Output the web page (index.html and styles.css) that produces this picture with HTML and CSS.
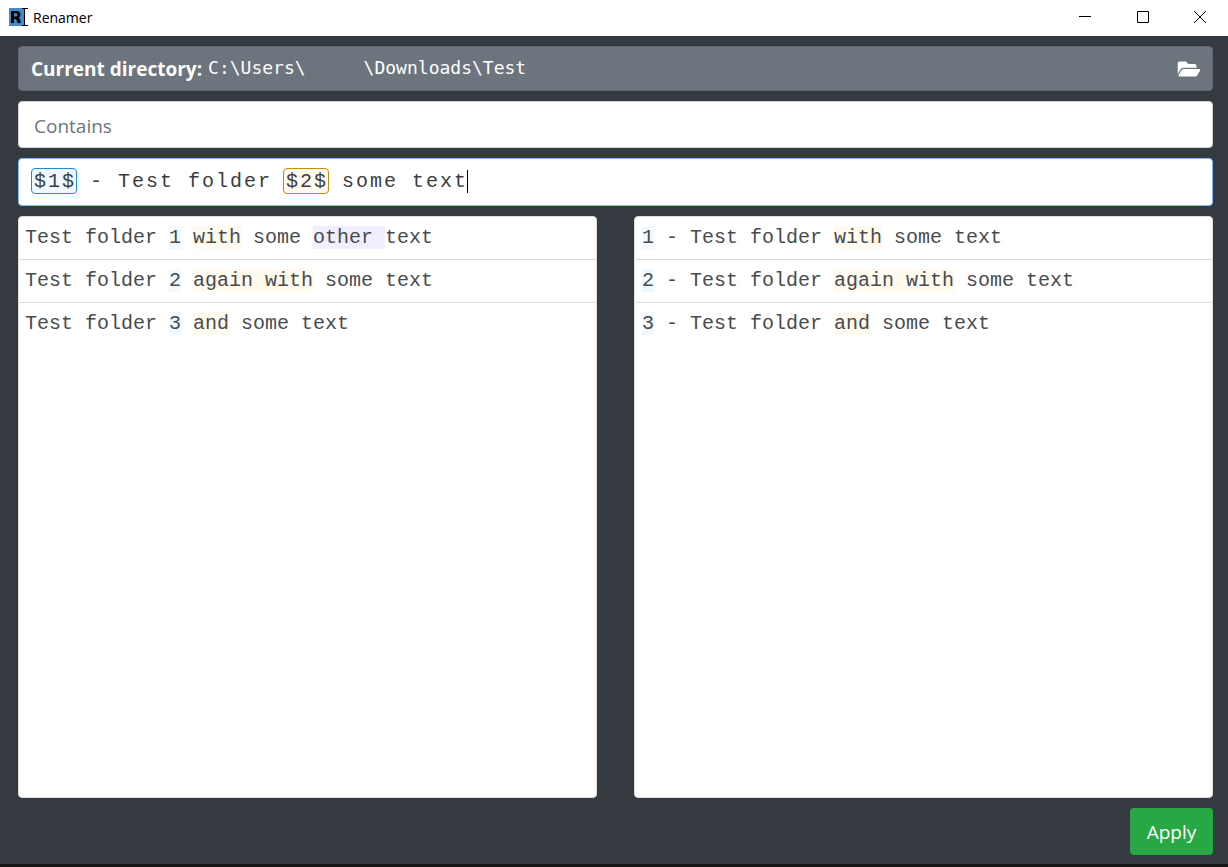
FILE: index.html
```html
<!DOCTYPE html>
<html lang="en">
<head>
<meta charset="utf-8">
<meta name="viewport" content="width=device-width, initial-scale=1">
<title>Renamer</title>
<link rel="stylesheet" href="styles.css">
</head>
<body>
<div class="window">
  <header class="titlebar">
    <svg class="app-icon" viewBox="0 0 19 18" aria-hidden="true">
      <rect width="15" height="18" fill="#428bca"/>
      <path fill="#000" fill-rule="evenodd" d="M2 3h5.500q4 0 4 3.600 0 2.400-2 3.200 1 .4 1.600 1.900L12 15H8.600l-1.100-3q-.4-1.100-1.300-1.100H5V15H2zM5 5.300v3.300h1.800q1.600 0 1.600-1.700T6.900 5.300z"/>
      <path fill="none" stroke="#000" d="M13 .5h6M13 17.500h6M15.500 0v18"/>
    </svg>
    <h1 class="titlebar-name">Renamer</h1>
    <div class="window-controls">
      <button class="window-button" type="button" aria-label="Minimize">
        <svg viewBox="0 0 12 12" aria-hidden="true"><path d="M0 5.500h12"/></svg>
      </button>
      <button class="window-button" type="button" aria-label="Maximize">
        <svg viewBox="0 0 12 12" aria-hidden="true"><path d="M.5.5h11v11H.5z"/></svg>
      </button>
      <button class="window-button" type="button" aria-label="Close">
        <svg viewBox="0 0 12 12" aria-hidden="true"><path d="M0 0l12 12M12 0L0 12"/></svg>
      </button>
    </div>
  </header>

  <main class="content">
    <section class="directory">
      <strong class="directory-label">Current directory:</strong>
      <code class="directory-path"><span>C:\Users\</span><span>\Downloads\Test</span></code>
      <button class="directory-open" type="button" aria-label="Choose directory">
        <svg viewBox="0 0 576 512" aria-hidden="true"><path fill="#fff" d="M572.694 292.093L500.270 416.248A63.997 63.997 0 0 1 444.989 448H45.025c-18.523 0-30.064-20.093-20.731-36.093l72.424-124.155A64 64 0 0 1 152 256h399.964c18.523 0 30.064 20.093 20.730 36.093zM152 224h328v-48c0-26.510-21.490-48-48-48H272l-64-64H48C21.490 64 0 85.490 0 112v278.046l69.077-118.418C86.214 242.250 117.989 224 152 224z"/></svg>
      </button>
    </section>

    <input class="field filter" type="text" placeholder="Contains" aria-label="Contains">

    <div class="field pattern">
      <div class="pattern-marks" aria-hidden="true">
        <span class="chip chip-blue"></span>
        <span class="chip chip-gold"></span>
        <span class="caret"></span>
      </div>
      <input class="pattern-input" type="text" aria-label="New name pattern" value="$1$ - Test folder $2$ some text" spellcheck="false">
    </div>

    <div class="panes">
      <ul class="pane" aria-label="Current names">
        <li class="row">Test folder <mark class="blue">1</mark> <mark class="gold">with</mark> some <mark class="violet">other </mark>text</li>
        <li class="row">Test folder <mark class="blue">2</mark> <mark class="gold">again with</mark> some text</li>
        <li class="row">Test folder <mark class="blue">3</mark> <mark class="gold">and</mark> some text</li>
      </ul>
      <ul class="pane pane-result" aria-label="New names">
        <li class="row"><mark class="blue">1</mark> - Test folder <mark class="gold">with</mark> some text</li>
        <li class="row"><mark class="blue">2</mark> - Test folder <mark class="gold">again with</mark> some text</li>
        <li class="row"><mark class="blue">3</mark> - Test folder <mark class="gold">and</mark> some text</li>
      </ul>
    </div>

    <button class="apply" type="button">Apply</button>
  </main>
</div>
</body>
</html>
```
FILE: styles.css
```css
* {
  box-sizing: border-box;
}

body {
  margin: 0;
  font-family: "Open Sans", "Noto Sans", sans-serif;
  font-size: 19px;
  color: #212529;
}

button,
input {
  font: inherit;
  color: inherit;
}

.window {
  display: flex;
  flex-direction: column;
  min-height: 100vh;
  background: #353940;
  border-bottom: 3px solid #151518;
}

.titlebar {
  display: flex;
  align-items: center;
  height: 36px;
  padding: 0 0 2px 9px;
  background: #fff;
  color: #000;
}

.app-icon {
  width: 19px;
  height: 18px;
  margin-right: 5px;
}

.titlebar-name {
  margin: 0;
  font-size: 14px;
  font-weight: 400;
}

.window-controls {
  display: flex;
  margin-left: auto;
}

.window-button {
  display: grid;
  place-items: center;
  width: 58px;
  height: 34px;
  padding: 0;
  border: 0;
  background: none;
}

.window-button:last-child {
  width: 56px;
}

.window-button svg {
  width: 12px;
  height: 12px;
  fill: none;
  stroke: #000;
}

.content {
  display: flex;
  flex: 1;
  flex-direction: column;
  gap: 10px;
  padding: 10px 15px 9px 18px;
}

.directory {
  display: flex;
  align-items: center;
  height: 45px;
  padding: 0 11px 0 12px;
  border: 1px solid #5f676f;
  border-radius: 4px;
  background: #6c757d;
  color: #fff;
}

.directory-label {
  margin-right: 6px;
  font-weight: 700;
}

.directory-path {
  display: flex;
  gap: 58px;
  padding-bottom: 2px;
  font-family: "DejaVu Sans Mono", monospace;
  font-size: 18px;
}

.directory-open {
  display: grid;
  margin-left: auto;
  padding: 0;
  border: 0;
  background: none;
}

.directory-open svg {
  width: 24px;
  height: 20px;
}

.field {
  width: 100%;
  height: 47px;
  border: 1px solid #ced4da;
  border-radius: 4px;
  background: #fff;
}

.filter {
  padding: 2px 15px 0;
}

.filter::placeholder {
  color: #6c757d;
  opacity: 1;
}

.pattern {
  position: relative;
  height: 48px;
  border-color: #80bdff;
}

.pattern-input {
  position: relative;
  width: 100%;
  height: 100%;
  padding: 0 15px 2px;
  border: 0;
  outline: 0;
  background: none;
  color: #3a3d40;
  font-family: "Liberation Mono", monospace;
  font-size: 20px;
  letter-spacing: 2px;
  caret-color: transparent;
}

.pattern-marks {
  position: absolute;
  inset: 0;
  display: flex;
  align-items: flex-start;
  padding: 9px 12px;
}

.chip {
  width: 46px;
  height: 26px;
  border: 1px solid;
  border-radius: 4px;
}

.chip-blue {
  margin-right: 206px;
  border-color: #1b8fd0;
  background: #f0f9ff;
}

.chip-gold {
  margin-right: 138px;
  border-color: #c98a10;
  background: #fff9ee;
}

.caret {
  width: 1px;
  height: 23px;
  margin-top: 2px;
  background: #000;
}

.panes {
  display: grid;
  flex: 1;
  grid-template-columns: 1fr 1fr;
  gap: 37px;
}

.pane {
  margin: 0;
  padding: 0;
  border: 1px solid #dcdcdc;
  border-radius: 4px;
  background: #fff;
  list-style: none;
}

.pane-result {
  padding-left: 1px;
}

.row {
  height: 43px;
  padding: 0 6px;
  border-bottom: 1px solid #dcdcdc;
  color: #484b4f;
  font-family: "Liberation Mono", monospace;
  font-size: 20px;
  line-height: 41px;
}

.row:last-child {
  border-bottom: 0;
}

mark {
  color: inherit;
}

.blue {
  background: #f0f9ff;
}

.gold {
  background: #fff9ee;
}

.violet {
  background: #f0eeff;
}

.apply {
  align-self: flex-end;
  min-width: 83px;
  height: 47px;
  padding: 0 16px;
  border: 0;
  border-radius: 4px;
  background: #28a745;
  color: #fff;
}
```
